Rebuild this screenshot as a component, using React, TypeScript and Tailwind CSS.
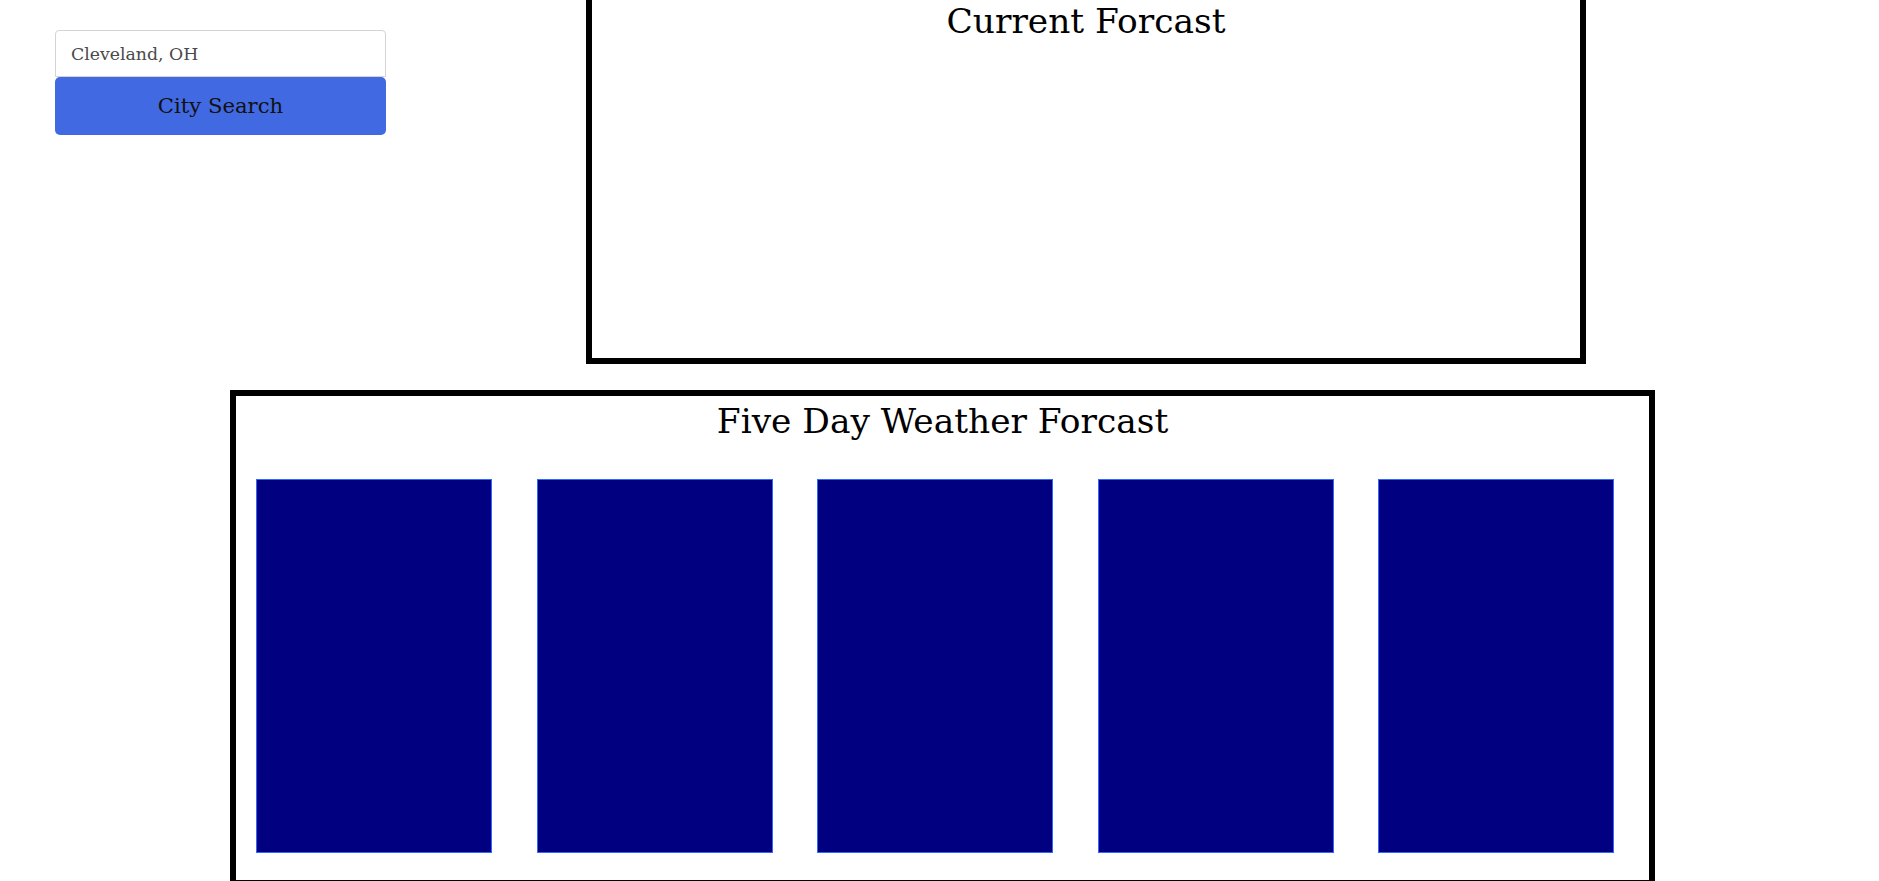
export default function App() {
  const days = [1, 2, 3, 4, 5]

  return (
    <div className="min-h-screen bg-white font-['DejaVu_Serif',serif] text-black">
      <div className="flex items-start">
        {/* search */}
        <div className="ml-[55px] mt-[30px] flex w-[331px] flex-col">
          <input
            type="text"
            defaultValue="Cleveland, OH"
            className="h-[47px] w-full rounded-t-[4px] border border-[#d4d4d4] px-[15px] text-[17.3px] text-[#4a4a4a] outline-none"
          />
          <button className="h-[58px] w-full rounded-[5px] bg-[#4169e1] text-[21.2px] text-[#111]">
            City Search
          </button>
        </div>

        {/* current forecast */}
        <div className="ml-[200px] mt-[-20px] h-[384px] w-[1000px] border-[6px] border-black">
          <h2 className="mt-[15px] text-center text-[34.4px] leading-[40px]">Current Forcast</h2>
        </div>
      </div>

      {/* five day */}
      <div className="ml-[230px] mt-[26px] w-[1425px] border-[6px] border-black pb-[27px]">
        <h2 className="mt-[5px] text-center text-[34.4px] leading-[40px]">Five Day Weather Forcast</h2>
        <div className="mt-[38px] flex gap-[44.5px] pl-[20px]">
          {days.map((d) => (
            <div key={d} className="h-[374px] w-[236px] border border-[#3366ff] bg-[#000080]" />
          ))}
        </div>
      </div>
    </div>
  )
}
